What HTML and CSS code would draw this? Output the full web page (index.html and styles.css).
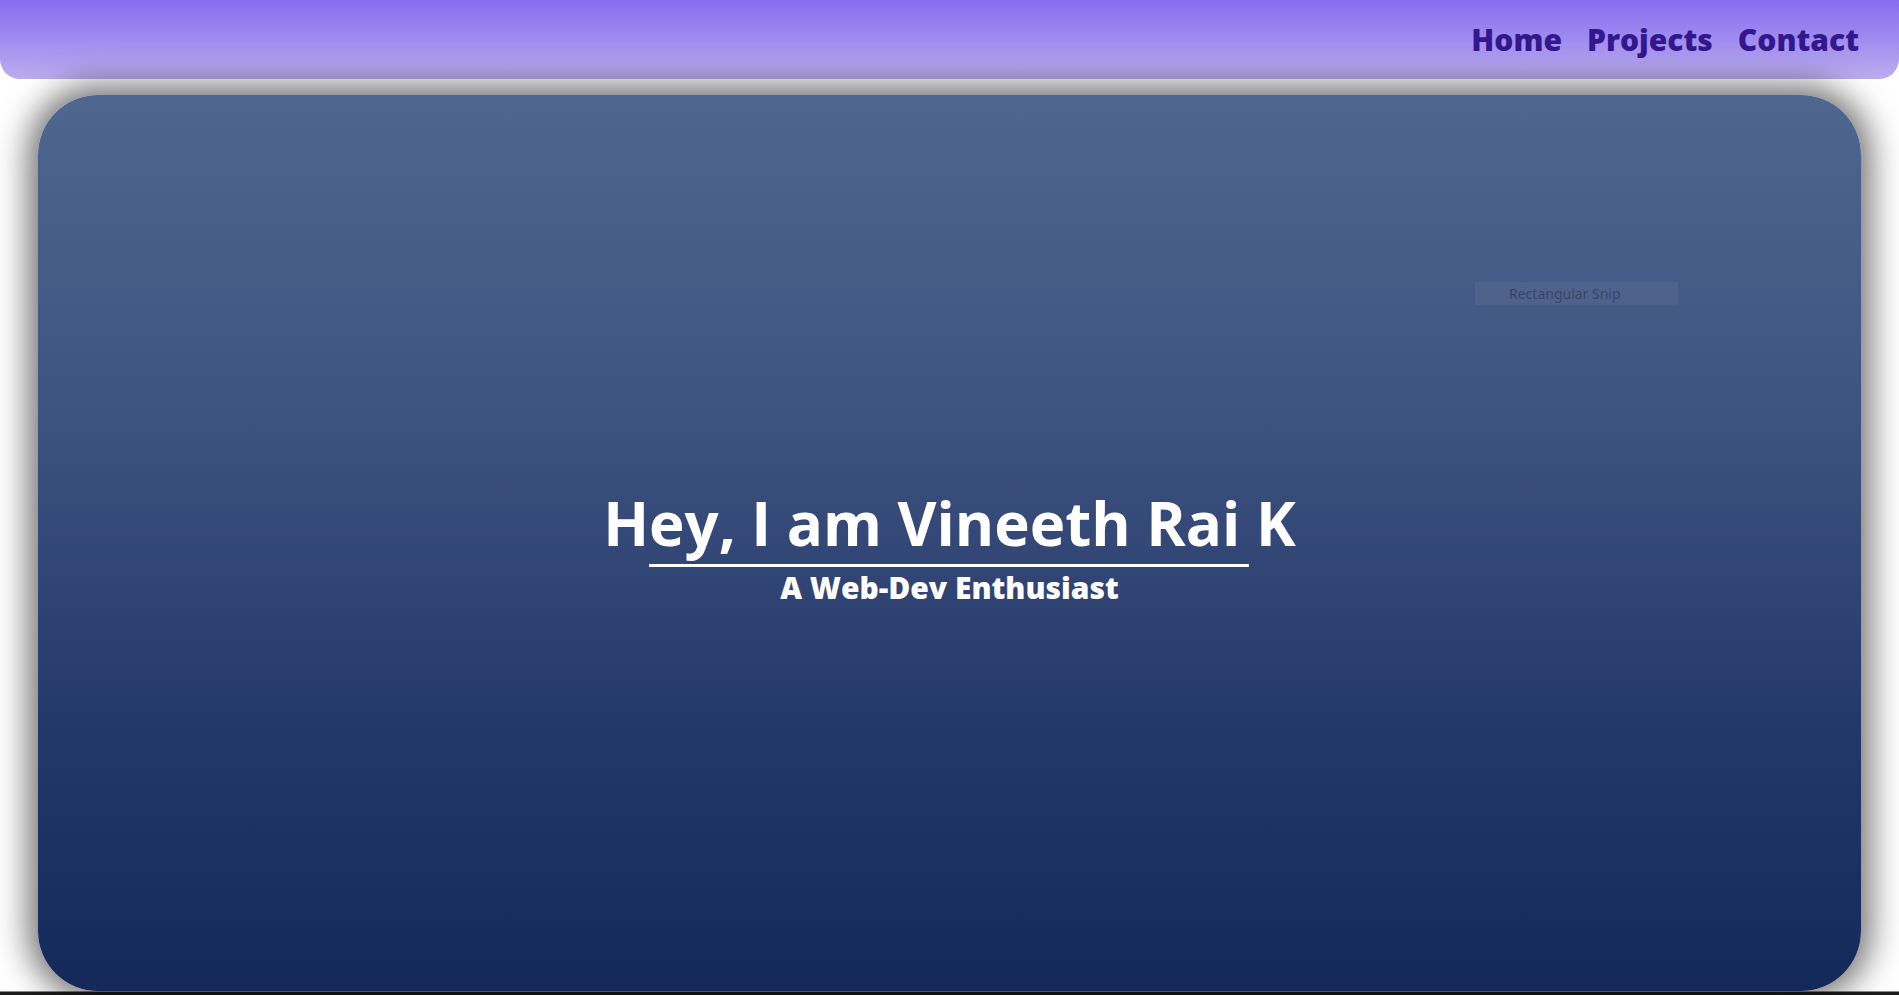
FILE: index.html
```html
<!DOCTYPE html>
<html lang="en">
<head>
<meta charset="utf-8">
<title>Vineeth Rai K</title>
<link rel="stylesheet" href="styles.css">
</head>
<body>
<nav class="navbar">
  <a class="nav-link" href="#">Home</a>
  <a class="nav-link" href="#">Projects</a>
  <a class="nav-link" href="#">Contact</a>
</nav>
<section class="hero">
  <div class="snip">Rectangular Snip</div>
  <div class="intro">
    <h1 class="title">Hey, I am Vineeth Rai K</h1>
    <div class="rule"></div>
    <p class="subtitle">A Web-Dev Enthusiast</p>
  </div>
</section>
<div class="taskbar"></div>
</body>
</html>
```

FILE: styles.css
```css
html, body {
  margin: 0;
  padding: 0;
}
body {
  background: #ffffff;
  font-family: "Open Sans", "Noto Sans", sans-serif;
  overflow: hidden;
}
.navbar {
  height: 79px;
  box-sizing: border-box;
  display: flex;
  justify-content: flex-end;
  align-items: center;
  gap: 25px;
  padding-right: 40px;
  background: linear-gradient(to bottom, #8a6cf1 0%, #a28ff0 55%, #bcaeee 100%);
  border-radius: 0 0 20px 20px;
}
.nav-link {
  font-size: 30px;
  font-weight: 800;
  color: #33178c;
  text-decoration: none;
}
.hero {
  position: relative;
  margin: 16px 38px 0;
  height: 896px;
  border-radius: 60px;
  background: linear-gradient(to bottom, #4f6690 0%, #3f5380 35%, #25386a 70%, #15285a 100%);
  box-shadow: 0 0 32px 10px rgba(0, 0, 0, 0.55);
  display: flex;
  justify-content: center;
  align-items: center;
}
.intro {
  display: flex;
  flex-direction: column;
  align-items: center;
  color: #ffffff;
  margin-top: 4px;
}
.title {
  margin: 0;
  font-size: 60px;
  font-weight: 700;
  line-height: normal;
}
.rule {
  width: 600px;
  height: 3px;
  background: #ffffff;
}
.subtitle {
  margin: 0;
  font-size: 30px;
  font-weight: 800;
  line-height: normal;
}
.snip {
  position: absolute;
  left: 1437px;
  top: 187px;
  width: 203px;
  height: 23px;
  box-sizing: border-box;
  padding-left: 34px;
  background: rgba(255, 255, 255, 0.05);
  color: rgba(20, 30, 60, 0.45);
  font-family: "Noto Sans", sans-serif;
  font-size: 14px;
  line-height: 23px;
}
.taskbar {
  margin-top: 0;
  height: 10px;
  background: #1c1c1c;
  border-top: 1px solid #8c8c8c;
}
```
